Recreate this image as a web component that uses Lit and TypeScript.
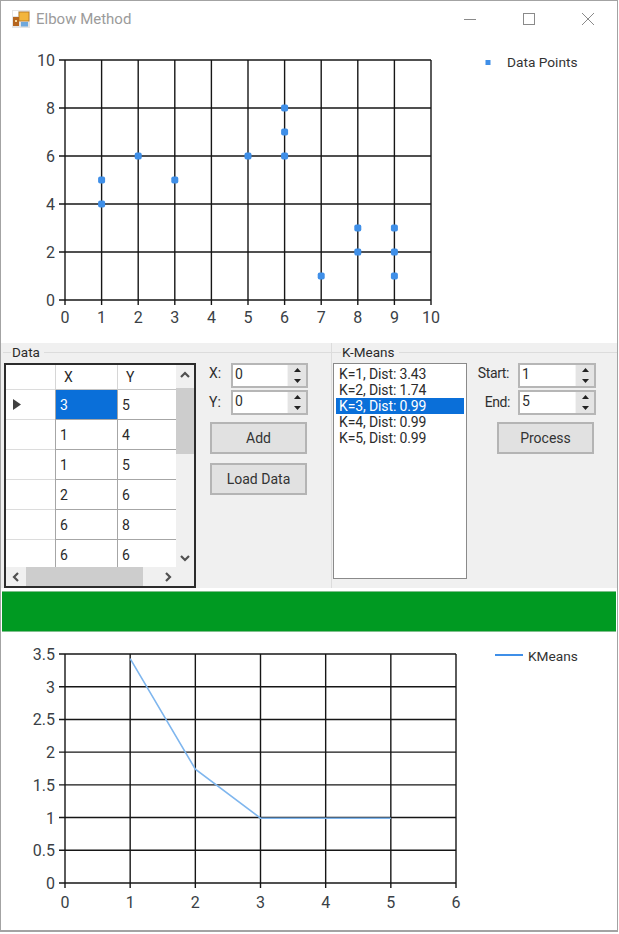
import { LitElement, html, css, svg } from "lit";
import { customElement } from "lit/decorators.js";

const INK = "#161616";
const LABEL = "#3a3f46";

function chart(o: {
  h: number; x0: number; x1: number; y0: number; y1: number;
  xs: number[]; ys: number[]; xMax: number; yMax: number; labelY: number; labelX: number;
  content: (px: (v: number) => number, py: (v: number) => number) => unknown;
  legend: unknown;
}) {
  const px = (v: number) => o.x0 + ((o.x1 - o.x0) * v) / o.xMax;
  const py = (v: number) => o.y1 - ((o.y1 - o.y0) * v) / o.yMax;
  return html`<svg class="chart" width="615" height=${o.h} viewBox="0 0 615 ${o.h}">
    ${o.xs.map((v) => svg`
      <line x1=${px(v)} x2=${px(v)} y1=${o.y0} y2=${o.y1 + 5} stroke=${INK} stroke-width="1.4"></line>
      <text x=${px(v)} y=${o.labelY} text-anchor="middle" font-size="16" fill=${LABEL}>${v}</text>`)}
    ${o.ys.map((v) => svg`
      <line x1=${o.x0 - 6} x2=${o.x1} y1=${py(v)} y2=${py(v)} stroke=${INK} stroke-width="1.4"></line>
      <text x=${o.labelX} y=${py(v) + 6} text-anchor="end" font-size="16" fill=${LABEL}>${v}</text>`)}
    ${o.content(px, py)}
    ${o.legend}
  </svg>`;
}

const POINTS = [[3,5],[1,4],[1,5],[2,6],[6,8],[6,6],[6,7],[5,6],[7,1],[8,2],[8,3],[9,1],[9,2],[9,3]];
const ELBOW = [[1,3.43],[2,1.74],[3,0.99],[4,0.99],[5,0.99]];
const ROWS = [[3,5],[1,4],[1,5],[2,6],[6,8],[6,6]];
const KM = ["K=1, Dist: 3.43","K=2, Dist: 1.74","K=3, Dist: 0.99","K=4, Dist: 0.99","K=5, Dist: 0.99"];

@customElement("app-root")
export class AppRoot extends LitElement {
  static styles = css`
    :host { display: block; width: 619px; height: 934px; background: #fff; font-family: "Roboto", "Noto Sans", sans-serif; color: #222; overflow: hidden; }
    .win { width: 618px; height: 932px; box-sizing: border-box; border: 1px solid #a3a3a3; border-bottom-width: 2px; background: #fff; display: flex; flex-direction: column; }
    .title { height: 39px; box-sizing: border-box; padding-bottom: 3px; flex: none; display: flex; align-items: center; padding-left: 11px; }
    .title-text { margin-left: 6px; font-size: 15px; color: #9b9b9b; flex: 1; }
    .wbtn { width: 59px; height: 36px; display: flex; align-items: center; justify-content: center; }
    .chart { display: block; flex: none; font-family: "Roboto", "Noto Sans", sans-serif; }
    .middle { height: 245px; flex: none; background: #f0f0f0; display: flex; padding-left: 2px; }
    .group { display: flex; flex-direction: column; }
    .g1 { width: 328px; }
    .g2 { flex: 1; border-left: 1px solid #dcdcdc; }
    .ghead { display: flex; align-items: center; height: 14px; margin-top: 2px; font-size: 13.5px; color: #2b2b2b; }
    .gdash { width: 8px; height: 1px; background: #dcdcdc; flex: none; }
    .k .gdash { width: 9px; }
    .gline { flex: 1; height: 1px; background: #dcdcdc; margin-left: 4px; }
    .gbody { display: flex; margin-top: 4px; }
    .grid { width: 192px; height: 225px; box-sizing: border-box; margin-left: 1px; border: 2px solid #2c2c2c; background: #f0f0f0; display: grid; grid-template-columns: 170px 18px; grid-template-rows: 202px 19px; font-size: 14px; }
    .tbl { display: grid; grid-template-columns: 49px 62px 59px; grid-auto-rows: 30px; grid-template-rows: 25px; overflow: hidden; background: #fff; align-content: start; }
    .cell { border-left: 1px solid #a6a6a6; border-bottom: 1px solid #a6a6a6; display: flex; align-items: center; padding-left: 4px; box-sizing: border-box; color: #2a2a2a; }
    .hcell { border-bottom: 1px solid #c4c4c4; border-left: 1px solid #d6d6d6; padding-left: 8px; }
    .rhead { border-left: 0; border-bottom: 1px solid #dcdcdc; padding-left: 7px; }
    .sel { background: #0a6fd9; color: #fff; }
    .vbar { display: flex; flex-direction: column; align-items: center; background: #f0f0f0; }
    .arrow { height: 19px; flex: none; display: flex; align-items: center; justify-content: center; width: 100%; }
    .vthumb { width: 100%; height: 66px; background: #cdcdcd; flex: none; margin-top: 4px; }
    .hbar { grid-column: 1 / 3; display: flex; align-items: center; background: #f0f0f0; }
    .harrow { width: 20px; height: 19px; flex: none; display: flex; align-items: center; justify-content: center; }
    .hthumb { width: 117px; height: 19px; background: #cdcdcd; margin-right: 15px; }
    .side { margin-left: 12px; width: 100px; display: flex; flex-direction: column; }
    .srow { display: flex; align-items: flex-start; height: 27px; font-size: 14px; color: #2e2e2e; }
    .srow label { flex: 1; min-width: 0; white-space: nowrap; line-height: 18px; padding-left: 1px; padding-top: 1px; }
    .srow.second label { padding-top: 3px; }
    .spin { width: 77px; height: 25px; box-sizing: border-box; border: 2px solid #b6b6b6; background: #fff; display: flex; justify-content: space-between; font-size: 14px; line-height: 19px; padding-left: 2px; flex: none; }
    .sbtns { width: 18px; flex: none; background: #e4e4e4; display: flex; flex-direction: column; justify-content: space-around; align-items: center; border-left: 1px solid #f4f4f4; }
    .tri { width: 7px; height: 4px; display: block; }
    .btn { height: 32px; width: 97px; box-sizing: border-box; border: 2px solid #b4b4b4; background: #e1e1e1; font: inherit; font-size: 14px; color: #333; display: flex; align-items: center; justify-content: center; flex: none; }
    .b1 { margin: 5px 0 0 2px; }
    .b2 { margin: 9px 0 0 2px; }
    .list { margin-left: 1px; width: 134px; height: 216px; box-sizing: border-box; border: 1px solid #8a8a8a; background: #fff; padding: 2px; font-size: 14px; letter-spacing: -.12px; color: #2c2c2c; }
    .item { height: 16px; line-height: 16px; padding-left: 3px; white-space: nowrap; }
    .item.on { background: #0a6fd9; color: #fff; }
    .side2 { margin-left: 10px; width: 119px; }
    .side2 label { text-align: right; padding-left: 0; padding-right: 9px; letter-spacing: -.4px; }
    .side2 .second label { padding-right: 8px; }
    .side2 .spin { width: 78px; }
    .b3 { margin: 5px 0 0 20px; }
    .green { flex: none; margin: 3px 1px 0 1px; background: #009a22; border-top: 1px solid #7fbf8c; border-bottom: 1px solid #7fbf8c; box-sizing: border-box; height: 41px; }
    .legend { font-size: 13.7px; fill: #333; }
  `;

  private tri(up: boolean) {
    return html`<svg class="tri" viewBox="0 0 7 4"><path d=${up ? "M3.5 0 7 4H0Z" : "M0 0H7L3.5 4Z"} fill="#222"></path></svg>`;
  }

  private spin(v: number) {
    return html`<div class="spin"><span>${v}</span><div class="sbtns">${this.tri(true)}${this.tri(false)}</div></div>`;
  }

  private chev(d: string) {
    return html`<svg width="12" height="12" viewBox="0 0 12 12"><path d=${d} fill="none" stroke="#505050" stroke-width="2.2"></path></svg>`;
  }

  render() {
    return html`<div class="win">
      <div class="title">
        <svg width="18" height="18" viewBox="0 0 18 18">
          <rect width="18" height="18" fill="#e4e4e4"></rect>
          <rect x="1" y="1" width="5" height="5" fill="#fff"></rect>
          <rect x="7" y="2" width="10" height="9" fill="#f2b53c" stroke="#b5741c" stroke-width=".8"></rect>
          <rect x="1" y="7" width="6" height="9" fill="#b5651d"></rect>
          <rect x="3" y="10" width="2" height="2" fill="#f6d9a0"></rect>
          <rect x="9" y="12" width="7" height="4.5" fill="#6fa8dc"></rect>
        </svg>
        <span class="title-text">Elbow Method</span>
        <div class="wbtn"><svg width="14" height="14" viewBox="0 0 14 14"><path d="M1 7.5H13" stroke="#8a8a8a"></path></svg></div>
        <div class="wbtn"><svg width="14" height="14" viewBox="0 0 14 14"><rect x="1.5" y="1.5" width="11" height="11" fill="none" stroke="#8a8a8a"></rect></svg></div>
        <div class="wbtn"><svg width="14" height="14" viewBox="0 0 14 14"><path d="M1 1 13 13M13 1 1 13" stroke="#8a8a8a"></path></svg></div>
      </div>
      ${chart({
        h: 303, x0: 64, x1: 430, y0: 20, y1: 260, xs: [0,1,2,3,4,5,6,7,8,9,10], ys: [0,2,4,6,8,10],
        xMax: 10, yMax: 10, labelY: 283, labelX: 54,
        content: (px, py) => POINTS.map(([x, y]) => svg`<rect x=${px(x) - 3.5} y=${py(y) - 3.5} width="7" height="7" rx="2" fill="#3f8fe8"></rect>`),
        legend: svg`<rect x="484.5" y="20" width="5" height="5" fill="#3f8fe8"></rect><text x="506" y="27" class="legend">Data Points</text>`,
      })}
      <div class="middle">
        <div class="group g1">
          <div class="ghead"><span class="gdash"></span><span style="margin-left:1px">Data</span><span class="gline"></span></div>
          <div class="gbody">
            <div class="grid">
              <div class="tbl">
                <div class="cell hcell rhead"></div><div class="cell hcell">X</div><div class="cell hcell">Y</div>
                ${ROWS.map((r, i) => html`
                  <div class="cell rhead">${i === 0 ? html`<svg width="8" height="11" viewBox="0 0 8 11"><path d="M0 0 8 5.5 0 11Z" fill="#404040"></path></svg>` : ""}</div>
                  <div class="cell ${i === 0 ? "sel" : ""}">${r[0]}</div>
                  <div class="cell">${r[1]}</div>`)}
              </div>
              <div class="vbar">
                <div class="arrow">${this.chev("M2 8 6 4l4 4")}</div>
                <div class="vthumb"></div>
                <div style="flex:1"></div>
                <div class="arrow">${this.chev("M2 4l4 4 4-4")}</div>
              </div>
              <div class="hbar">
                <div class="harrow">${this.chev("M8 2 4 6l4 4")}</div>
                <div class="hthumb"></div>
                <div class="harrow">${this.chev("M4 2l4 4-4 4")}</div>
              </div>
            </div>
            <div class="side">
              <div class="srow"><label>X:</label>${this.spin(0)}</div>
              <div class="srow second"><label>Y:</label>${this.spin(0)}</div>
              <div class="btn b1">Add</div>
              <div class="btn b2">Load Data</div>
            </div>
          </div>
        </div>
        <div class="group g2 k">
          <div class="ghead"><span class="gdash"></span><span style="margin-left:1px">K-Means</span><span class="gline"></span></div>
          <div class="gbody">
            <div class="list">${KM.map((k, i) => html`<div class="item ${i === 2 ? "on" : ""}">${k}</div>`)}</div>
            <div class="side side2">
              <div class="srow"><label>Start:</label>${this.spin(1)}</div>
              <div class="srow second"><label>End:</label>${this.spin(5)}</div>
              <div class="btn b3">Process</div>
            </div>
          </div>
        </div>
      </div>
      <div class="green"></div>
      ${chart({
        h: 298, x0: 64, x1: 455, y0: 22, y1: 251, xs: [0,1,2,3,4,5,6], ys: [0,0.5,1,1.5,2,2.5,3,3.5],
        xMax: 6, yMax: 3.5, labelY: 276, labelX: 54,
        content: (px, py) => svg`<polyline fill="none" stroke="#7fb6ee" stroke-width="1.6" points=${ELBOW.map(([x, y]) => `${px(x)},${py(y)}`).join(" ")}></polyline>`,
        legend: svg`<line x1="494" x2="522" y1="23" y2="23" stroke="#3f8fe8" stroke-width="2"></line><text x="527" y="29" class="legend">KMeans</text>`,
      })}
    </div>`;
  }
}
